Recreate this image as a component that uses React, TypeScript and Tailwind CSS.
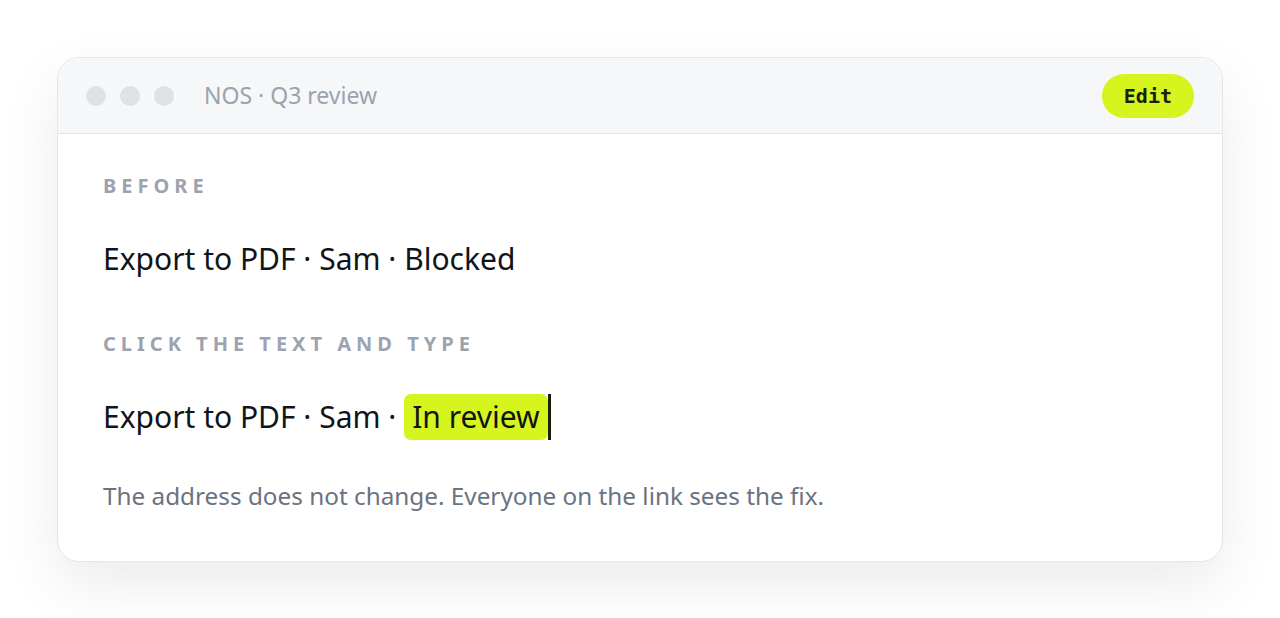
import React from 'react';

const sans = { fontFamily: '"Noto Sans", "Open Sans", sans-serif' };

export default function App() {
  return (
    <div className="min-h-screen bg-white flex items-start justify-center pt-[57px]" style={sans}>
      <div className="w-[1166px] rounded-[22px] border border-[#e5e7eb] bg-white overflow-hidden shadow-[0_24px_60px_rgba(0,0,0,0.08)]">
        {/* title bar */}
        <div className="h-[76px] flex items-center px-[28px] bg-[#f6f7f8] border-b border-[#e3e5e8]">
          <div className="flex gap-[14px]">
            <span className="w-[20px] h-[20px] rounded-full bg-[#dfe1e4]" />
            <span className="w-[20px] h-[20px] rounded-full bg-[#dfe1e4]" />
            <span className="w-[20px] h-[20px] rounded-full bg-[#dfe1e4]" />
          </div>
          <span className="ml-[30px] text-[23px] text-[#9ca3af]">NOS · Q3 review</span>
          <button className="ml-auto h-[44px] px-[22px] pt-[1px] rounded-full bg-[#d6f51e] text-[20px] font-bold text-[#1a1f0a] font-['DejaVu_Sans_Mono',monospace]">
            Edit
          </button>
        </div>

        {/* body */}
        <div className="px-[45px] pt-[38px] pb-[49px]">
          <div className="text-[20px] leading-[28px] font-bold tracking-[0.25em] text-[#9ca3af]">BEFORE</div>
          <div className="mt-[39px] text-[30px] leading-[40px] text-[#111418]">Export to PDF · Sam · Blocked</div>

          <div className="mt-[51px] text-[20px] leading-[28px] font-bold tracking-[0.25em] text-[#9ca3af]">CLICK THE TEXT AND TYPE</div>
          <div className="mt-[36px] flex items-center text-[30px] leading-[40px] text-[#111418]">
            <span className="whitespace-pre">Export to PDF · Sam · </span>
            <span className="flex items-center">
              <span className="h-[46px] px-[8px] flex items-center rounded-[7px] bg-[#d6f51e]">In review</span>
              <span className="w-[3px] h-[46px] bg-[#1a1f0a]" />
            </span>
          </div>

          <p className="mt-[40px] text-[24.3px] leading-[32px] text-[#6b7280]">
            The address does not change. Everyone on the link sees the fix.
          </p>
        </div>
      </div>
    </div>
  );
}
